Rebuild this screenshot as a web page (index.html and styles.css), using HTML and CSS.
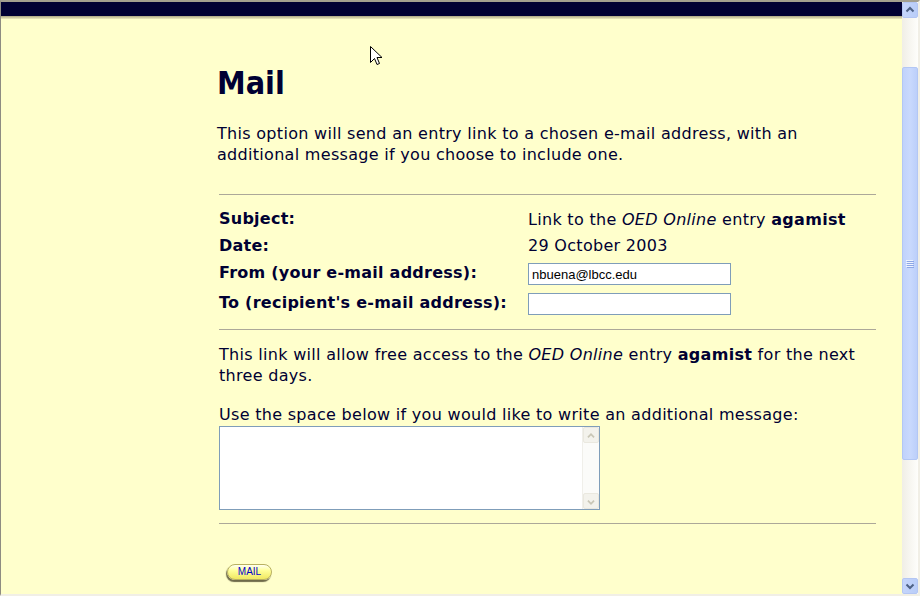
FILE: index.html
```html
<!DOCTYPE html>
<html>
<head>
<meta charset="utf-8">
<title>Mail</title>
<link rel="stylesheet" href="styles.css">
</head>
<body>
<div class="window">
  <div class="viewport">
    <div class="topbar"></div>
    <div class="topshadow"></div>
    <div class="page">
      <div class="content">
        <h1 class="title">Mail</h1>
        <p class="intro">This option will send an entry link to a chosen e-mail address, with an additional message if you choose to include one.</p>
        <div class="rule"></div>
        <div class="fields">
          <div class="label r1">Subject:</div>
          <div class="value r1">Link to the <i>OED Online</i> entry <b>agamist</b></div>
          <div class="label r2">Date:</div>
          <div class="value r2">29 October 2003</div>
          <div class="label r3">From (your e-mail address):</div>
          <div class="value r3"><input class="email" type="text" value="nbuena@lbcc.edu"></div>
          <div class="label r4">To (recipient's e-mail address):</div>
          <div class="value r4"><input class="email" type="text" value=""></div>
        </div>
        <div class="rule"></div>
        <p class="note">This link will allow free access to the <i>OED Online</i> entry <b>agamist</b> for the next three days.</p>
        <p class="note use">Use the space below if you would like to write an additional message:</p>
        <div class="msgbox">
          <textarea class="msg"></textarea>
          <div class="tscroll">
            <div class="tbtn"><svg width="16" height="16" viewBox="0 0 16 16"><path d="M4.5 9.5 L8 6 L11.5 9.5" fill="none" stroke="#c9c6b6" stroke-width="2"/></svg></div>
            <div class="ttrack"></div>
            <div class="tbtn"><svg width="16" height="16" viewBox="0 0 16 16"><path d="M4.5 6.5 L8 10 L11.5 6.5" fill="none" stroke="#c9c6b6" stroke-width="2"/></svg></div>
          </div>
        </div>
        <div class="rule"></div>
        <button class="mailbtn" type="button">MAIL</button>
      </div>
    </div>
  </div>
  <div class="vscroll">
    <div class="sbtn"><svg width="14" height="14" viewBox="0 0 14 14"><path d="M3.5 8.5 L7 5 L10.5 8.5" fill="none" stroke="#4d6185" stroke-width="2"/></svg></div>
    <div class="strack top"></div>
    <div class="thumb">
      <svg width="8" height="8" viewBox="0 0 8 8"><path d="M0 0.5H7M0 2.5H7M0 4.5H7M0 6.5H7" stroke="#eef3ff" stroke-width="1"/><path d="M1 1.5H8M1 3.5H8M1 5.5H8M1 7.5H8" stroke="#8da7e6" stroke-width="1"/></svg>
    </div>
    <div class="strack bottom"></div>
    <div class="sbtn"><svg width="14" height="14" viewBox="0 0 14 14"><path d="M3.5 5.5 L7 9 L10.5 5.5" fill="none" stroke="#4d6185" stroke-width="2"/></svg></div>
  </div>
  <svg class="cursor" width="13" height="21" viewBox="0 0 13 21"><path d="M0.5 0.5 L0.5 16.5 L4.5 12.5 L7 18.5 L9.5 17.5 L7 11.5 L12 11.5 Z" fill="#fff" stroke="#000" stroke-width="1" stroke-linejoin="miter"/></svg>
</div>
</body>
</html>
```
FILE: styles.css
```css
html, body {
  margin: 0;
  padding: 0;
  background: #ffffcc;
}
.window {
  position: relative;
  width: 920px;
  height: 596px;
  box-sizing: border-box;
  border-top: 2px solid #a29f8f;
  border-left: 1px solid #8e8c82;
  border-right: 2px solid #f1efe6;
  border-bottom: 2px solid #f1efe6;
  display: flex;
  overflow: hidden;
  background: #ffffcc;
}
.viewport {
  flex: 1;
  display: flex;
  flex-direction: column;
  min-width: 0;
}
.topbar {
  height: 14px;
  background: #000033;
}
.topshadow {
  height: 3px;
  background: linear-gradient(#a9a582, #cdc9a2 50%, #ecebbc);
}
.page {
  flex: 1;
  background: #ffffcc;
  color: #000033;
  font-family: "DejaVu Sans", Verdana, sans-serif;
  font-size: 16px;
  line-height: 21px;
  letter-spacing: 0.3px;
}
.content {
  margin-left: 216px;
  width: 660px;
}
.title {
  margin: 44px 0 0;
  font-family: "DejaVu Sans Condensed", "DejaVu Sans", sans-serif;
  font-stretch: condensed;
  font-weight: bold;
  font-size: 32px;
  line-height: 40px;
  letter-spacing: 0;
  color: #000033;
}
.intro {
  margin: 20px 0 0;
}
.rule {
  margin-left: 2px;
  width: 657px;
  height: 1px;
  background: #aca899;
}
.intro + .rule {
  margin-top: 29px;
}
.fields {
  margin: 13px 0 0 2px;
  display: grid;
  grid-template-columns: 309px 1fr;
  grid-template-rows: 27px 27px 30px 30px;
  align-items: start;
}
.label {
  font-weight: bold;
  font-size: 16px;
  letter-spacing: 0.25px;
}
.value.r1 {
  margin-top: 1px;
}
.email {
  display: block;
  margin: 1px 0 0;
  width: 203px;
  height: 22px;
  box-sizing: border-box;
  border: 1px solid #7f9db9;
  background: #fff;
  padding: 1px 3px 0;
  font-family: "Liberation Sans", Arial, sans-serif;
  font-size: 13px;
  letter-spacing: 0;
  color: #000;
  outline: none;
}
.fields + .rule {
  margin-top: 7px;
}
.note {
  margin: 14px 0 0 2px;
}
.note.use {
  margin-top: 18px;
}
.msgbox {
  margin: 1px 0 0 2px;
  width: 381px;
  height: 84px;
  box-sizing: border-box;
  border: 1px solid #7f9db9;
  background: #fff;
  display: flex;
}
.msg {
  flex: 1;
  border: 0;
  margin: 0;
  padding: 2px;
  resize: none;
  outline: none;
  overflow: hidden;
  background: #fff;
  font-family: "Liberation Sans", Arial, sans-serif;
  font-size: 13px;
}
.tscroll {
  width: 16px;
  display: flex;
  flex-direction: column;
  background: #fbfbf9;
  border-left: 1px solid #f0efea;
}
.tbtn {
  height: 16px;
  box-sizing: border-box;
  border: 1px solid #eae8df;
  border-radius: 2px;
  background: #f3f2ec;
  display: flex;
}
.ttrack {
  flex: 1;
}
.msgbox + .rule {
  margin-top: 13px;
}
.mailbtn {
  display: block;
  margin: 40px 0 0 10px;
  width: 45px;
  height: 16px;
  padding: 0;
  border: 1px solid #b8b060;
  border-radius: 8px;
  background: linear-gradient(#fffff0, #ffff99 40%, #f0e860);
  box-shadow: -1px 2px 1px #6e6a4a;
  color: #0000cc;
  font-family: "Liberation Sans", Arial, sans-serif;
  font-size: 10px;
  line-height: 14px;
  letter-spacing: 0;
}
.vscroll {
  width: 16px;
  display: flex;
  flex-direction: column;
  background: linear-gradient(90deg, #f0eee6, #fefefb);
}
.sbtn {
  height: 16px;
  box-sizing: border-box;
  border: 1px solid #b4c6f3;
  border-radius: 2px;
  background: linear-gradient(90deg, #c5d5fb, #b9cdf8);
  display: flex;
  align-items: center;
  justify-content: center;
}
.strack.top {
  height: 49px;
}
.strack.bottom {
  flex: 1;
}
.thumb {
  height: 393px;
  box-sizing: border-box;
  border: 1px solid #b3c7f4;
  border-radius: 2px;
  background: linear-gradient(90deg, #c0d2fc, #c9d9fd 50%, #bccffa);
  display: flex;
  align-items: center;
  justify-content: center;
}
.cursor {
  position: absolute;
  left: 369px;
  top: 44px;
}
```
